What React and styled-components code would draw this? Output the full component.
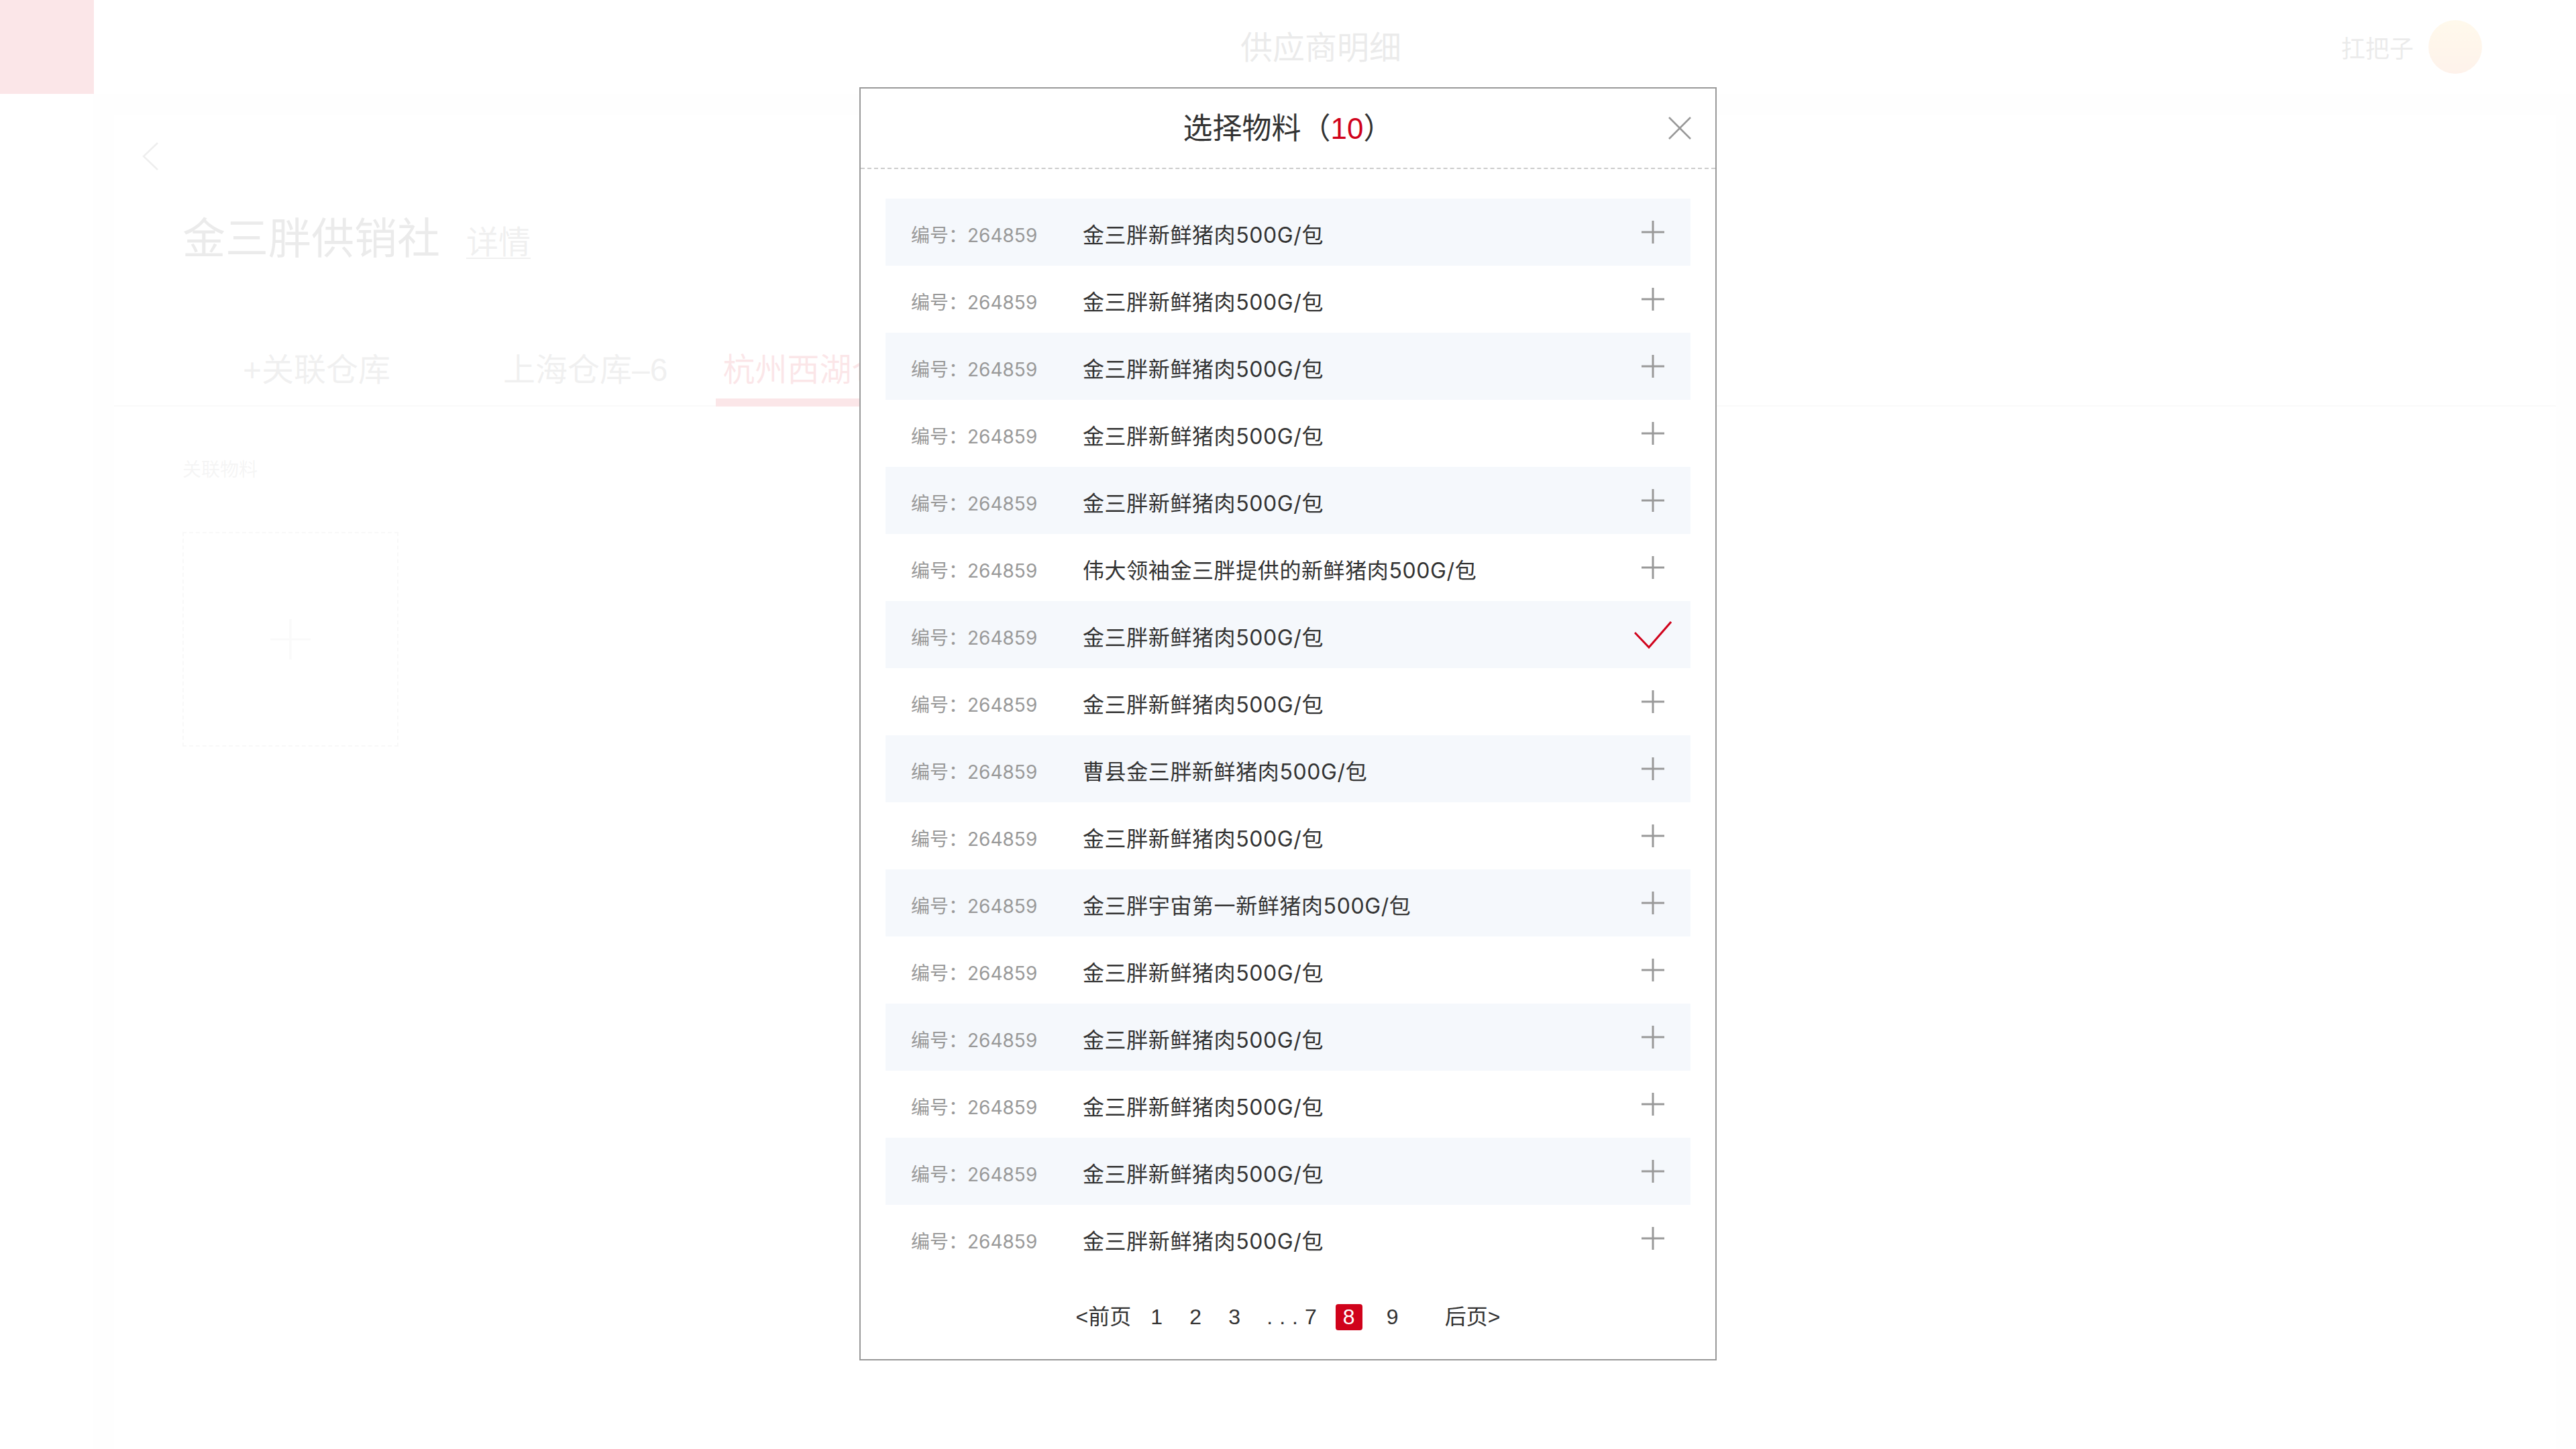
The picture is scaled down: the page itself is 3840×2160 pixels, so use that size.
import styled, { createGlobalStyle } from "styled-components";

const RED = "#d0021b";

const GlobalStyle = createGlobalStyle`
  html, body {
    margin: 0;
    padding: 0;
  }
  body {
    font-family: "Liberation Sans", "Noto Sans CJK SC", sans-serif;
    color: #333;
    overflow: hidden;
  }
  * {
    box-sizing: border-box;
  }
`;

const materials = [
    "金三胖新鲜猪肉500G/包",
    "金三胖新鲜猪肉500G/包",
    "金三胖新鲜猪肉500G/包",
    "金三胖新鲜猪肉500G/包",
    "金三胖新鲜猪肉500G/包",
    "伟大领袖金三胖提供的新鲜猪肉500G/包",
    "金三胖新鲜猪肉500G/包",
    "金三胖新鲜猪肉500G/包",
    "曹县金三胖新鲜猪肉500G/包",
    "金三胖新鲜猪肉500G/包",
    "金三胖宇宙第一新鲜猪肉500G/包",
    "金三胖新鲜猪肉500G/包",
    "金三胖新鲜猪肉500G/包",
    "金三胖新鲜猪肉500G/包",
    "金三胖新鲜猪肉500G/包",
    "金三胖新鲜猪肉500G/包",
].map((name, index) => ({id: index, code: "264859", name, checked: index === 6}));

const PlusIcon = ({color = "#999", size = 34, width = 3}) => (
    <svg width={size} height={size} viewBox="0 0 34 34">
        <line x1="17" y1="0" x2="17" y2="34" stroke={color} strokeWidth={width}/>
        <line x1="0" y1="17" x2="34" y2="17" stroke={color} strokeWidth={width}/>
    </svg>
);

const CheckIcon = () => (
    <svg width="56" height="42" viewBox="0 0 56 42">
        <polyline points="1,18 22,40 55,2" fill="none" stroke={RED} strokeWidth="3"/>
    </svg>
);

const CloseIcon = () => (
    <svg width="34" height="34" viewBox="0 0 34 34">
        <line x1="1" y1="1" x2="33" y2="33" stroke="#999" strokeWidth="2.5"/>
        <line x1="33" y1="1" x2="1" y2="33" stroke="#999" strokeWidth="2.5"/>
    </svg>
);

const BackIcon = () => (
    <svg width="26" height="42" viewBox="0 0 26 42">
        <polyline points="24,1 3,21 24,41" fill="none" stroke="#555" strokeWidth="2.5"/>
    </svg>
);

const App = () => {
    return (
        <>
            <GlobalStyle/>
            <Page>
                <Sidebar>
                    <Logo/>
                </Sidebar>
                <Main>
                    <Header>
                        <HeaderTitle>供应商明细</HeaderTitle>
                        <User>
                            <UserName>扛把子</UserName>
                            <Avatar/>
                        </User>
                    </Header>
                    <Card>
                        <BackRow>
                            <BackIcon/>
                        </BackRow>
                        <TitleRow>
                            <ShopName>金三胖供销社</ShopName>
                            <DetailLink>详情</DetailLink>
                        </TitleRow>
                        <TabRow>
                            <Tab $first>+关联仓库</Tab>
                            <Tab>上海仓库–6</Tab>
                            <Tab $active>杭州西湖仓</Tab>
                        </TabRow>
                        <Section>
                            <SectionLabel>关联物料</SectionLabel>
                            <AddBox>
                                <PlusIcon color="#ccc" size={60} width={2}/>
                            </AddBox>
                        </Section>
                    </Card>
                </Main>
            </Page>

            <Mask>
                <Modal>
                    <ModalHeader>
                        <ModalTitle>选择物料（<Count>10</Count>）</ModalTitle>
                        <CloseButton>
                            <CloseIcon/>
                        </CloseButton>
                    </ModalHeader>
                    <List>
                        {materials.map((item, index) => (
                            <Row key={item.id} $striped={index % 2 === 0}>
                                <Code>编号：{item.code}</Code>
                                <Name>{item.name}</Name>
                                <Action>
                                    {item.checked ? <CheckIcon/> : <PlusIcon/>}
                                </Action>
                            </Row>
                        ))}
                    </List>
                    <Pager>
                        <PagerText>&lt;前页</PagerText>
                        <PageNum>1</PageNum>
                        <PageNum>2</PageNum>
                        <PageNum>3</PageNum>
                        <Ellipsis>...7</Ellipsis>
                        <PageNum $active>8</PageNum>
                        <PageNum $gapLeft={7}>9</PageNum>
                        <PagerText $gapLeft={40}>后页&gt;</PagerText>
                    </Pager>
                </Modal>
            </Mask>
        </>
    );
};

const Page = styled.div`
  display: flex;
  width: 100vw;
  height: 100vh;
  background: #f0f0f0;
`;
const Sidebar = styled.div`
  width: 140px;
  flex-shrink: 0;
  background: #fff;
  border-right: 1px solid #e6e6e6;
`;
const Logo = styled.div`
  width: 140px;
  height: 140px;
  background: ${RED};
`;
const Main = styled.div`
  flex: 1;
  display: flex;
  flex-direction: column;
`;
const Header = styled.div`
  height: 140px;
  background: #fff;
  display: grid;
  grid-template-columns: 1fr auto 1fr;
  align-items: center;
  padding-right: 42px;
`;
const HeaderTitle = styled.div`
  grid-column: 2;
  font-size: 48px;
  line-height: 48px;
  color: #333;
  padding-top: 3px;
`;
const User = styled.div`
  justify-self: end;
  display: flex;
  align-items: center;
  gap: 22px;
  margin-right: 98px;
`;
const UserName = styled.span`
  font-size: 36px;
  color: #333;
`;
const Avatar = styled.div`
  width: 80px;
  height: 80px;
  border-radius: 50%;
  background: linear-gradient(180deg, #ffc23c, #f07c3a);
`;
const Card = styled.div`
  flex: 1;
  margin: 31px 30px 0 30px;
  background: #fff;
  display: flex;
  flex-direction: column;
`;
const BackRow = styled.div`
  padding: 41px 0 0 41px;
  height: 83px;
`;
const TitleRow = styled.div`
  display: flex;
  align-items: baseline;
  gap: 39px;
  padding: 70px 0 0 102px;
`;
const ShopName = styled.div`
  font-size: 64px;
  line-height: 64px;
  color: #333;
`;
const DetailLink = styled.span`
  font-size: 48px;
  line-height: 48px;
  color: #666;
  text-decoration: underline;
  text-underline-offset: 6px;
  text-decoration-thickness: 2px;
`;
const TabRow = styled.div`
  display: flex;
  align-items: flex-end;
  gap: 62px;
  margin-top: 140px;
  padding-left: 182px;
  border-bottom: 2px solid #ccc;
`;
const Tab = styled.div`
  font-size: 48px;
  line-height: 48px;
  padding: 0 10px 18px;
  margin-bottom: -2px;
  margin-right: ${({$first}) => ($first ? "86px" : "0")};
  color: ${({$active}) => ($active ? RED : "#666")};
  border-bottom: 12px solid ${({$active}) => ($active ? RED : "transparent")};
  white-space: nowrap;
`;
const Section = styled.div`
  padding: 81px 0 0 102px;
`;
const SectionLabel = styled.div`
  font-size: 28px;
  line-height: 28px;
  color: #999;
`;
const AddBox = styled.div`
  margin-top: 78px;
  width: 322px;
  height: 320px;
  border: 2px dashed #bbb;
  display: flex;
  align-items: center;
  justify-content: center;
`;

const Mask = styled.div`
  position: fixed;
  inset: 0;
  background: rgba(255, 255, 255, 0.9);
  display: flex;
  justify-content: center;
  align-items: flex-start;
  padding-top: 130px;
`;
const Modal = styled.div`
  width: 1278px;
  height: 1898px;
  background: #fff;
  border: 2px solid #999;
  display: flex;
  flex-direction: column;
`;
const ModalHeader = styled.div`
  height: 120px;
  flex-shrink: 0;
  border-bottom: 2px dashed #ccc;
  display: grid;
  grid-template-columns: 1fr auto 1fr;
  align-items: center;
`;
const ModalTitle = styled.div`
  grid-column: 2;
  font-size: 44px;
  line-height: 44px;
  color: #333;
  padding-top: 2px;
`;
const Count = styled.span`
  color: ${RED};
`;
const CloseButton = styled.div`
  justify-self: end;
  margin-right: 36px;
  display: flex;
  width: 34px;
  height: 34px;
`;
const List = styled.div`
  padding: 44px 37px 0;
  display: flex;
  flex-direction: column;
`;
const Row = styled.div`
  height: 100px;
  display: flex;
  align-items: center;
  padding-left: 38px;
  padding-right: 26px;
  background: ${({$striped}) => ($striped ? "#f5f8fc" : "#fff")};
`;
const Code = styled.div`
  width: 256px;
  flex-shrink: 0;
  font-family: "Inter", "Noto Sans CJK SC", sans-serif;
  font-size: 28px;
  color: #999;
  padding-top: 6px;
`;
const Name = styled.div`
  flex: 1;
  font-family: "Inter", "Noto Sans CJK SC", sans-serif;
  font-size: 32px;
  letter-spacing: 0.6px;
  color: #333;
  padding-top: 3px;
`;
const Action = styled.div`
  width: 60px;
  display: flex;
  justify-content: center;
  align-items: center;
`;
const Pager = styled.div`
  display: flex;
  justify-content: center;
  align-items: center;
  gap: 18px;
  padding-top: 48px;
  height: 130px;
  padding-bottom: 43px;
`;
const PagerText = styled.span`
  font-size: 32px;
  line-height: 39px;
  color: #333;
  margin-left: ${({$gapLeft}) => ($gapLeft ? `${$gapLeft}px` : "0")};
`;
const PageNum = styled.span`
  width: 40px;
  height: 39px;
  display: flex;
  align-items: center;
  justify-content: center;
  font-size: 32px;
  border-radius: 4px;
  color: ${({$active}) => ($active ? "#fff" : "#333")};
  background: ${({$active}) => ($active ? RED : "transparent")};
  margin-left: ${({$gapLeft}) => ($gapLeft ? `${$gapLeft}px` : "0")};
`;
const Ellipsis = styled.span`
  font-size: 32px;
  line-height: 39px;
  letter-spacing: 10px;
  color: #333;
  margin-left: 10px;
`;

export default App;
